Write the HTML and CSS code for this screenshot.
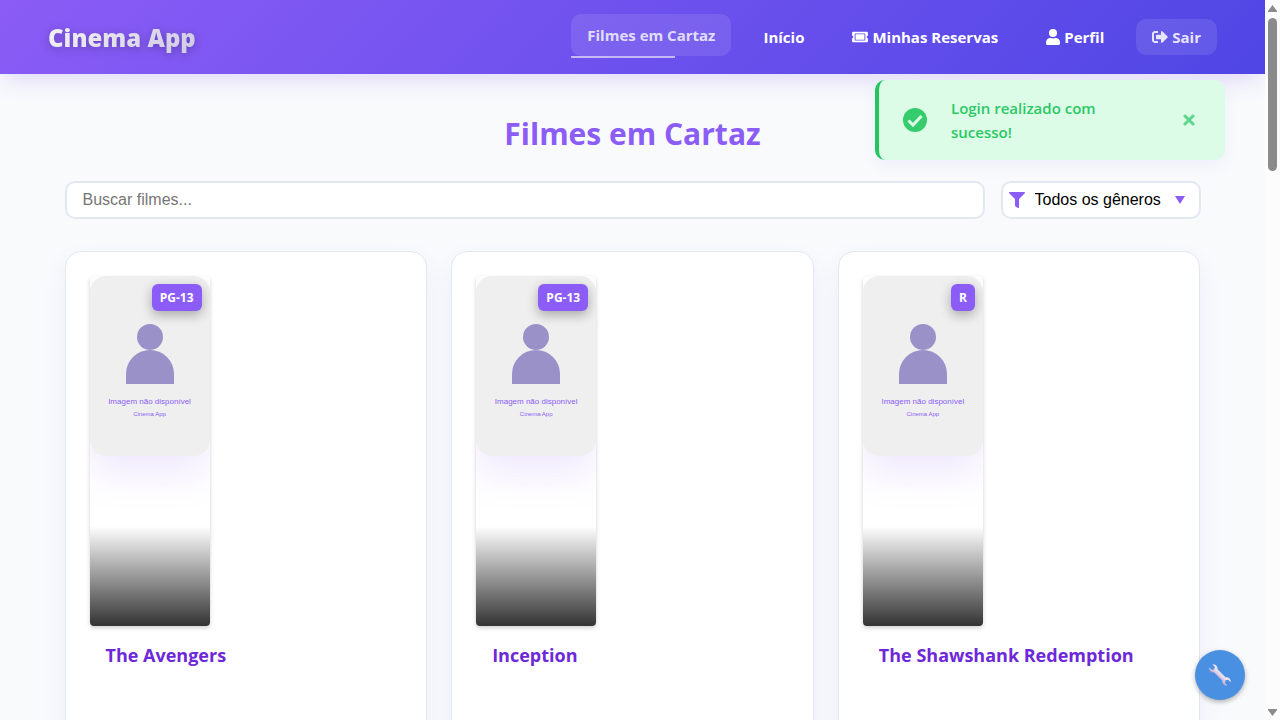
FILE: index.html
```html
<!DOCTYPE html>
<html lang="pt-BR">
<head>
<meta charset="utf-8">
<meta name="viewport" content="width=device-width, initial-scale=1">
<title>Cinema App</title>
<link rel="stylesheet" href="styles.css">
</head>
<body>
<svg class="symbols" aria-hidden="true">
  <symbol id="person" viewBox="0 0 48 60"><circle cx="24" cy="13" r="13"/><path d="M0 60V50a24 24 0 0 1 48 0v10z"/></symbol>
</svg>
<div class="app">
  <header class="header">
    <a class="logo" href="#">Cinema App</a>
    <nav class="nav">
      <a class="nav-link nav-link-active" href="#">Filmes em Cartaz</a>
      <a class="nav-link" href="#">Início</a>
      <a class="nav-link" href="#"><svg class="icon" viewBox="0 0 576 512"><path fill-rule="evenodd" d="M48 64C21 64 0 85 0 112v96c27 0 48 21 48 48s-21 48-48 48v96c0 27 21 48 48 48h480c27 0 48-21 48-48v-96c-27 0-48-21-48-48s21-48 48-48v-96c0-27-21-48-48-48zM120 128h336c13 0 24 11 24 24v208c0 13-11 24-24 24H120c-13 0-24-11-24-24V152c0-13 11-24 24-24zM128 160h320v192H128z"/></svg>Minhas Reservas</a>
      <a class="nav-link" href="#"><svg class="icon icon-user" viewBox="0 0 448 512"><path d="M224 256a128 128 0 1 0 0-256 128 128 0 0 0 0 256zm-90 32C60 288 0 348 0 422v42c0 26 22 48 48 48h352c26 0 48-22 48-48v-42c0-74-60-134-134-134h-17c-45 21-101 21-146 0z"/></svg>Perfil</a>
      <button class="nav-link nav-button" type="button"><svg class="icon" viewBox="0 0 512 512"><path d="M497 273L329 441c-15 15-41 4.500-41-17v-96H152c-13.300 0-24-10.700-24-24v-96c0-13.300 10.700-24 24-24h136V88c0-21.400 25.900-32 41-17l168 168c9.300 9.400 9.300 24.600 0 34zM192 436v-40c0-6.600-5.400-12-12-12H96c-17.700 0-32-14.300-32-32V160c0-17.700 14.300-32 32-32h84c6.600 0 12-5.400 12-12V76c0-6.600-5.400-12-12-12H96c-53 0-96 43-96 96v192c0 53 43 96 96 96h84c6.600 0 12-5.400 12-12z"/></svg>Sair</button>
    </nav>
  </header>

  <main class="main">
    <h1 class="page-title">Filmes em Cartaz</h1>
    <div class="filters">
      <input class="search" type="text" placeholder="Buscar filmes..." aria-label="Buscar filmes">
      <label class="genre">
        <svg class="icon-filter" viewBox="0 0 512 512"><path d="M488 0H24C2.700 0-8 25.900 7 41l185 185v206c0 8 4 15 10 20l80 56c16 11 38 0 38-20V226L505 41c15-15 4.400-41-17-41z"/></svg>
        <select class="genre-select" aria-label="Gênero"><option>Todos os gêneros</option></select>
        <svg class="icon-caret" viewBox="0 0 10 8"><path d="M0 0h10L5 8z"/></svg>
      </label>
    </div>

    <div class="movies">
      <article class="card">
        <div class="poster">
          <div class="placeholder"><svg class="person"><use href="#person"/></svg><span class="no-image">Imagem não disponível</span><span class="brand">Cinema App</span></div>
          <span class="rating">PG-13</span>
        </div>
        <h2 class="movie-title">The Avengers</h2>
      </article>
      <article class="card">
        <div class="poster">
          <div class="placeholder"><svg class="person"><use href="#person"/></svg><span class="no-image">Imagem não disponível</span><span class="brand">Cinema App</span></div>
          <span class="rating">PG-13</span>
        </div>
        <h2 class="movie-title">Inception</h2>
      </article>
      <article class="card">
        <div class="poster">
          <div class="placeholder"><svg class="person"><use href="#person"/></svg><span class="no-image">Imagem não disponível</span><span class="brand">Cinema App</span></div>
          <span class="rating">R</span>
        </div>
        <h2 class="movie-title">The Shawshank Redemption</h2>
      </article>
    </div>
  </main>

  <div class="toast" role="status">
    <svg class="toast-icon" viewBox="0 0 24 24"><circle cx="12" cy="12" r="12"/><path d="M5.500 12.500l4.500 4.500 8.500-9"/></svg>
    <p class="toast-text">Login realizado com sucesso!</p>
    <button class="toast-close" type="button" aria-label="Fechar"><svg class="close-icon" viewBox="0 0 12 12"><path d="M2 2l8 8M10 2l-8 8"/></svg></button>
  </div>

  <button class="tools" type="button" aria-label="Ferramentas"><svg class="wrench" viewBox="0 0 24 24">
    <defs><linearGradient id="metal" x1="0" y1="1" x2="1" y2="0"><stop offset="0.350" stop-color="#b9a3cc"/><stop offset="0.550" stop-color="#f0e3f0"/></linearGradient></defs>
    <path fill="url(#metal)" d="M4.300 1.600C7.200.8 9.900 3 9.500 6.200l8 8c3.100-.5 5.700 1.900 5.200 5l-2.500-2.400-2.700.5-.5 2.800 2.400 2.400c-3 .6-5.600-1.900-5.200-5l-8-8c-3.200.4-5.500-2.200-4.900-5.200l2.500 2.400 2.500-.5.500-2.500z"/></svg></button>
</div>
<div class="scrollbar" aria-hidden="true">
  <svg class="scroll-arrow" viewBox="0 0 9 7"><path d="M4.500 0L9 6v1H0V6z"/></svg>
  <div class="scroll-thumb"></div>
  <svg class="scroll-arrow scroll-down" viewBox="0 0 9 7"><path d="M4.500 7L9 1V0H0v1z"/></svg>
</div>
</body>
</html>
```
FILE: styles.css
```css
* { box-sizing: border-box; }
body {
  margin: 0;
  height: 100vh;
  display: flex;
  overflow: hidden;
  background: #f8fafc;
  font-family: "Open Sans", "Noto Sans", sans-serif;
  font-size: 15px;
  line-height: 24px;
}
h1, h2, p { margin: 0; }
button { font: inherit; border: 0; cursor: pointer; }
.symbols { position: absolute; width: 0; height: 0; }
.app { flex: 1; min-width: 0; position: relative; overflow: hidden; }

.header {
  display: flex;
  align-items: center;
  justify-content: space-between;
  min-height: 74px;
  padding: 0 48px;
  background: linear-gradient(135deg, #8b5cf6, #4f46e5);
  box-shadow: 0 10px 25px -5px rgba(124, 70, 230, 0.2);
}
.logo {
  padding-top: 2px;
  font-size: 24px;
  line-height: 36px;
  font-weight: 800;
  text-decoration: none;
  color: transparent;
  background: linear-gradient(135deg, #f4f4f4, #cfc9e6);
  background-clip: text;
  -webkit-background-clip: text;
  filter: drop-shadow(0 2px 4px rgba(0, 0, 0, 0.25));
}
.nav { display: flex; align-items: center; gap: 16px; }
.nav-link {
  display: flex;
  align-items: center;
  gap: 4px;
  padding: 6px 16px;
  border-radius: 10px;
  color: #fff;
  font-weight: 700;
  text-decoration: none;
}
.nav-link-active {
  position: relative;
  padding: 9px 16px;
  margin-bottom: 4px;
  background: rgba(255, 255, 255, 0.1);
  color: rgba(255, 255, 255, 0.8);
}
.nav-link-active::after {
  content: "";
  position: absolute;
  left: 0;
  bottom: -2px;
  width: 65%;
  height: 2px;
  background: rgba(255, 255, 255, 0.6);
}
.nav-button { background: rgba(255, 255, 255, 0.1); color: rgba(255, 255, 255, 0.85); }
.icon { width: 16px; height: 16px; fill: currentColor; }
.icon-user { width: 14px; }

.main { max-width: 1200px; margin: 0 auto; padding: 36px 32px; }
.page-title {
  text-align: center;
  font-size: 30px;
  line-height: 48px;
  font-weight: 700;
  color: #8b5cf6;
}
.filters { display: flex; align-items: center; gap: 16px; margin: 23px 0 32px; }
.search, .genre {
  border: 2px solid #e2e8f0;
  border-radius: 10px;
  background: #fff;
  height: 38px;
}
.search {
  flex: 1;
  min-width: 0;
  padding: 0 16px;
  font: 16px "Liberation Sans", sans-serif;
}
.search::placeholder { color: #757575; }
.genre { display: flex; align-items: center; width: 200px; padding: 0 14px 0 6px; }
.icon-filter { width: 16px; height: 16px; fill: #8b5cf6; }
.genre-select {
  flex: 1;
  min-width: 0;
  appearance: none;
  border: 0;
  padding: 0 0 2px 10px;
  background: transparent;
  color: #000;
  font: 16px "Liberation Sans", sans-serif;
}
.icon-caret { width: 10px; height: 8px; fill: #8b5cf6; }

.movies { display: grid; grid-template-columns: repeat(3, 1fr); gap: 24px; }
.card {
  min-height: 520px;
  padding: 24px;
  border: 1px solid #e2e8f0;
  border-radius: 16px;
  background: #fff;
  box-shadow: 0 10px 25px rgba(99, 90, 240, 0.07);
}
.poster {
  position: relative;
  width: 120px;
  height: 350px;
  overflow: hidden;
  border-radius: 4px;
  box-shadow: 0 2px 4px rgba(0, 0, 0, 0.18);
}
.poster::after {
  content: "";
  position: absolute;
  inset: auto 0 0;
  height: 100px;
  background: linear-gradient(to top, rgba(0, 0, 0, 0.8), transparent);
}
.placeholder {
  display: flex;
  flex-direction: column;
  align-items: center;
  height: 180px;
  padding-top: 48px;
  border-radius: 16px;
  background: #efefef;
  color: #8b5cf6;
  font-family: "Liberation Sans", sans-serif;
  box-shadow: 0 16px 40px rgba(139, 92, 246, 0.15);
}
.person { width: 48px; height: 60px; fill: #9b91c9; }
.no-image { margin-top: 11px; font-size: 8px; line-height: 13px; white-space: nowrap; }
.brand { font-size: 6px; line-height: 12px; }
.rating {
  position: absolute;
  top: 8px;
  right: 8px;
  padding: 4px 8px;
  border-radius: 6px;
  background: #8b5cf6;
  color: #fff;
  font-size: 12px;
  line-height: 19px;
  font-weight: 700;
  box-shadow: 0 4px 12px rgba(0, 0, 0, 0.3);
}
.movie-title {
  padding: 16px 16px 0;
  font-size: 18px;
  line-height: 26px;
  font-weight: 700;
  color: #6d28d9;
}

.toast {
  position: absolute;
  top: 80px;
  right: 40px;
  display: flex;
  align-items: center;
  gap: 24px;
  width: 350px;
  padding: 16px 24px;
  border-left: 4px solid #22c55e;
  border-radius: 10px;
  background: #dcfce7;
  color: #2bc866;
  font-weight: 600;
  box-shadow: 0 6px 16px rgba(99, 90, 240, 0.06);
}
.toast-icon { flex: none; width: 24px; height: 24px; fill: #34cc6d; }
.toast-icon path, .close-icon path { fill: none; stroke: #dcfce7; stroke-width: 3; }
.toast-text { flex: 1; padding-right: 40px; }
.toast-close { display: flex; padding: 6px; background: transparent; }
.close-icon { width: 12px; height: 12px; }
.close-icon path { stroke: #5bd68a; stroke-linecap: round; }

.tools {
  position: absolute;
  right: 20px;
  bottom: 20px;
  display: flex;
  align-items: center;
  justify-content: center;
  width: 50px;
  height: 50px;
  padding: 0;
  border-radius: 50%;
  background: #4a90e2;
  box-shadow: 0 2px 5px rgba(0, 0, 0, 0.3);
}
.wrench { width: 24px; height: 24px; }

.scrollbar {
  display: flex;
  flex-direction: column;
  align-items: center;
  width: 15px;
  padding: 5px 0 4px;
  background: #fcfcfc;
}
.scroll-arrow { width: 9px; height: 7px; fill: #8b8b8b; }
.scroll-thumb { width: 9px; height: 153px; margin-top: 6px; border-radius: 5px; background: #8b8b8b; }
.scroll-down { margin-top: auto; }
```
